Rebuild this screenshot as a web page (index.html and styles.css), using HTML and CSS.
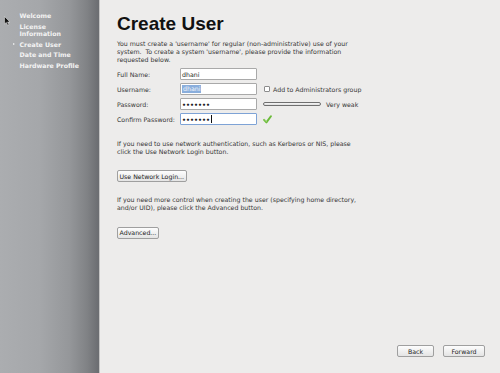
FILE: index.html
```html
<!DOCTYPE html>
<html lang="en">
<head>
  <meta charset="UTF-8" />
  <title>Create User</title>
  <link rel="stylesheet" href="styles.css">
</head>
<body>

  <!-- Sidebar -->
  <div class="sidebar">
    <svg class="pointer" width="7" height="10" viewBox="0 0 7 10">
      <path d="M0.5 0.5 L0.5 8 L2.3 6.4 L3.7 9.3 L4.9 8.7 L3.6 6 L6 6 Z" fill="#111" stroke="#eee" stroke-width="0.5"/>
    </svg>
    <ul class="steps">
      <li>Welcome</li>
      <li>License<br>Information</li>
      <li class="current">Create User</li>
      <li>Date and Time</li>
      <li>Hardware Profile</li>
    </ul>
  </div>

  <!-- Main Content -->
  <div class="main">
    <h1>Create User</h1>
    <p class="intro">You must create a 'username' for regular (non-administrative) use of your<br>system.&nbsp; To create a system 'username', please provide the information<br>requested below.</p>

    <div class="form">
      <span class="label">Full Name:</span>
      <div class="entry">dhani</div>
      <span></span>

      <span class="label">Username:</span>
      <div class="entry"><span class="selected">dhani</span></div>
      <div class="extra">
        <span class="checkbox"></span>
        <span>Add to Administrators group</span>
      </div>

      <span class="label">Password:</span>
      <div class="entry dots">•••••••</div>
      <div class="extra">
        <span class="strength"></span>
        <span>Very weak</span>
      </div>

      <span class="label">Confirm Password:</span>
      <div class="entry dots focus">•••••••<span class="caret"></span></div>
      <div class="extra">
        <svg class="check" width="9" height="9" viewBox="0 0 10 10">
          <path d="M1.2 5.4 L3.8 8.2 L8.8 1.4" fill="none" stroke="#6cbb3a" stroke-width="2.2" stroke-linecap="round" stroke-linejoin="round"/>
          <path d="M1.6 5.2 L3.8 7.4" fill="none" stroke="#b4e48c" stroke-width="0.8" stroke-linecap="round"/>
        </svg>
      </div>
    </div>

    <p class="note">If you need to use network authentication, such as Kerberos or NIS, please<br>click the Use Network Login button.</p>
    <div class="action"><button class="btn">Use Network Login...</button></div>

    <p class="note">If you need more control when creating the user (specifying home directory,<br>and/or UID), please click the Advanced button.</p>
    <div class="action"><button class="btn">Advanced...</button></div>

    <div class="nav-buttons">
      <button class="btn back">Back</button>
      <button class="btn forward">Forward</button>
    </div>
  </div>

</body>
</html>
```

FILE: styles.css
```css
* {
  box-sizing: border-box;
  margin: 0;
  padding: 0;
}

body {
  font-family: 'DejaVu Sans', sans-serif;
  font-size: 6.25px;
  color: #363636;
  background: #edeceb;
  display: flex;
  height: 373px;
  overflow: hidden;
}

/* Sidebar */
.sidebar {
  width: 100px;
  flex-shrink: 0;
  position: relative;
  background: linear-gradient(to right, #abadb0 0%, #a5a7aa 40%, #95979a 70%, #808285 88%, #6c6e72 99%);
  border-right: 1px solid #c4c4c4;
  padding-top: 12px;
}

.pointer {
  position: absolute;
  left: 4px;
  top: 16px;
}

.steps {
  list-style: none;
  padding-left: 13px;
  display: flex;
  flex-direction: column;
  gap: 3px;
}

.steps li {
  display: flex;
  align-items: flex-start;
  font-weight: bold;
  line-height: 7.5px;
  color: #f3f3f3;
}

.steps li::before {
  content: "";
  width: 0;
  height: 0;
  margin-top: 2.2px;
  margin-right: 4.5px;
  border-left: 2.5px solid transparent;
  border-top: 1.6px solid transparent;
  border-bottom: 1.6px solid transparent;
}

.steps li.current::before {
  border-left-color: #f3f3f3;
}

/* Main Content */
.main {
  flex-grow: 1;
  display: flex;
  flex-direction: column;
  padding: 0 15px 16px 17px;
}

h1 {
  font-family: 'Liberation Sans', Arial, sans-serif;
  font-size: 19px;
  line-height: 19px;
  font-weight: bold;
  color: #111;
  margin-top: 14px;
}

.intro,
.note {
  line-height: 8px;
}

.intro {
  margin-top: 6.5px;
}

.note {
  margin-top: 14px;
}

.form + .note {
  margin-top: 14.5px;
}

/* Form */
.form {
  margin-top: 4.5px;
  display: grid;
  grid-template-columns: 63px 77px auto;
  grid-auto-rows: 12px;
  row-gap: 3px;
  align-items: center;
}

.entry {
  height: 12px;
  border: 1px solid #a9a9a9;
  border-radius: 1px;
  background: #fff;
  padding-left: 1px;
  display: flex;
  align-items: center;
  color: #1c1c1c;
}

.entry.focus {
  border-color: #7ea3d6;
}

.entry.dots {
  font-weight: bold;
}

.selected {
  background: #8aaedc;
  color: #f4f7fb;
  line-height: 8px;
  padding: 0 1px;
}

.caret {
  width: 1px;
  height: 8px;
  background: #111;
  margin-left: 1px;
}

.extra {
  display: flex;
  align-items: center;
  padding-left: 6px;
}

.checkbox {
  width: 6px;
  height: 6px;
  border: 1px solid #8c8c8c;
  border-radius: 1px;
  background: #fff;
  margin-left: 1px;
  margin-right: 3px;
}

.strength {
  width: 58px;
  height: 4px;
  border: 1px solid #6f6f6f;
  border-radius: 2px;
  background: linear-gradient(#f6f6f6, #dedede);
  margin-right: 5px;
}

/* Buttons */
.btn {
  font: inherit;
  color: #222;
  height: 12px;
  padding: 0 1.5px;
  border: 1px solid #9f9f9f;
  border-radius: 2px;
  background: linear-gradient(#fdfdfd, #e4e4e4);
}

.action {
  margin-top: 14.5px;
}

.nav-buttons {
  margin-top: auto;
  display: flex;
  justify-content: flex-end;
  gap: 9px;
}

.back {
  width: 37px;
}

.forward {
  width: 42px;
}
```
